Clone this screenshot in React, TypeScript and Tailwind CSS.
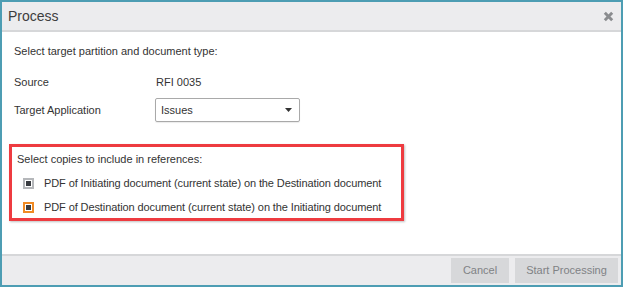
import React from "react";

export default function App() {
  return (
    <div
      className="w-[624px] h-[288px] bg-white overflow-hidden"
      style={{ fontFamily: '"Liberation Sans", Arial, sans-serif' }}
    >
      <div className="w-[623px] h-[287px] border-2 border-[#4d9db3] flex flex-col bg-white">
        {/* Header */}
        <div className="h-[30px] shrink-0 bg-[#ececee] border-b-2 border-[#d6d7d9] flex items-center justify-between pl-[6px] pr-[6px]">
          <span className="text-[14px] text-[#3d3d3d]">Process</span>
          <svg width="11" height="11" viewBox="0 0 12 12" className="mr-[1px]">
            <path
              d="M2 2 L10 10 M10 2 L2 10"
              stroke="#8a8c8f"
              strokeWidth="3.2"
              strokeLinecap="butt"
            />
          </svg>
        </div>

        {/* Body */}
        <div className="flex-1 flex flex-col pl-[12px] pt-[11px] text-[11px] text-[#333] whitespace-nowrap">
          <div className="h-[16px] leading-[16px]">Select target partition and document type:</div>
          <div className="flex items-center mt-[15px] h-[16px] leading-[16px]">
            <span className="w-[142px]">Source</span>
            <span>RFI 0035</span>
          </div>
          <div className="flex items-center mt-[8px]">
            <span className="w-[141px]">Target Application</span>
            <div className="w-[145px] h-[24px] border border-[#a9a9a9] rounded-[2px] flex items-center justify-between pl-[5px] pr-[7px] shadow-[0_1px_1px_rgba(0,0,0,0.08)]">
              <span>Issues</span>
              <svg width="7" height="4" viewBox="0 0 7 4">
                <path d="M0 0 L7 0 L3.5 4 Z" fill="#333" />
              </svg>
            </div>
          </div>

          <div className="ml-[-5px] mt-[22px] w-[395px] h-[77px] border-[3px] border-[#ee3b40] shadow-[1px_1px_2px_rgba(0,0,0,0.25)] pl-[5px] pt-[4px]">
            <div className="h-[16px] leading-[16px]">Select copies to include in references:</div>
            <div className="flex items-center mt-[8px] h-[16px]">
              <div className="ml-[6px] w-[11px] h-[11px] border-2 border-[#b5b7ba] bg-white flex items-center justify-center">
                <div className="w-[5px] h-[5px] bg-[#3a3d42]" />
              </div>
              <span className="ml-[10px] leading-[16px] tracking-[-0.1px]">PDF of Initiating document (current state) on the Destination document</span>
            </div>
            <div className="flex items-center mt-[8px] h-[16px]">
              <div className="ml-[6px] w-[11px] h-[11px] border-2 border-[#f08a24] bg-white flex items-center justify-center">
                <div className="w-[5px] h-[5px] bg-[#3a3d42]" />
              </div>
              <span className="ml-[10px] leading-[16px] tracking-[-0.1px]">PDF of Destination document (current state) on the Initiating document</span>
            </div>
          </div>
        </div>

        {/* Footer */}
        <div className="h-[31px] shrink-0 bg-[#ececee] border-t-2 border-[#d6d7d9] flex items-center justify-end gap-[6px] pr-[3px]">
          <div className="w-[58px] h-[25px] bg-[#d7d8da] flex items-center justify-center text-[11px] text-[#808285]">
            Cancel
          </div>
          <div className="w-[103px] h-[25px] bg-[#d7d8da] flex items-center justify-center text-[11px] text-[#808285]">
            Start Processing
          </div>
        </div>
      </div>
    </div>
  );
}
